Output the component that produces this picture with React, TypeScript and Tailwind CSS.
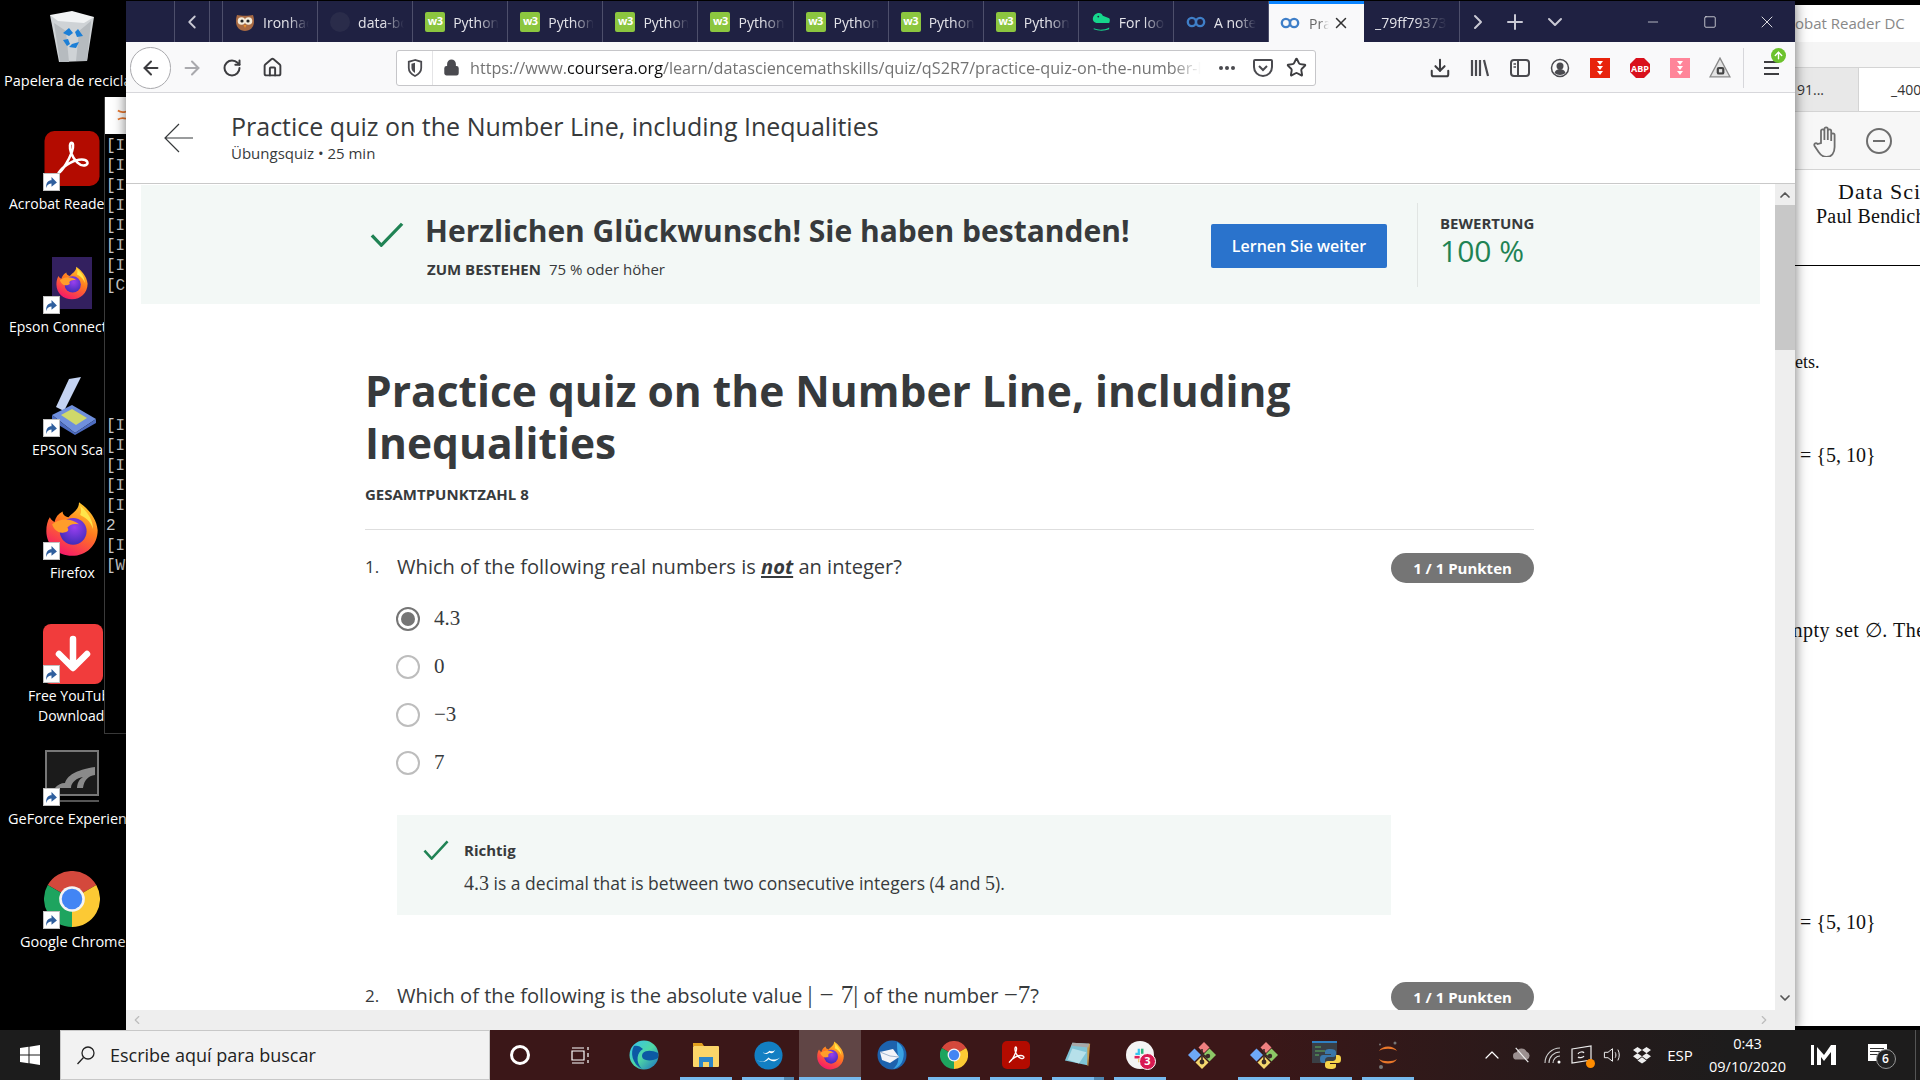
import { ArrowLeft, ArrowRight, ChevronDown, ChevronLeft, ChevronRight, ChevronUp, Download, Home, Lock, Minus, Plus, RotateCw, Square, Star, X } from "lucide-react";

function Firefox({ className }: { className: string }) {
  return (
    <svg viewBox="0 0 48 48" className={className}>
      <defs>
        <linearGradient id="ffBody" x1="0.8" y1="0" x2="0.3" y2="1">
          <stop offset="0" stopColor="#ffd32e" />
          <stop offset="0.45" stopColor="#ff7a1f" />
          <stop offset="1" stopColor="#f5156c" />
        </linearGradient>
        <radialGradient id="ffCore" cx="0.55" cy="0.35" r="0.7">
          <stop offset="0" stopColor="#9a3ff0" />
          <stop offset="1" stopColor="#3a2bb4" />
        </radialGradient>
      </defs>
      <path d="M30 1c7 5 15 13 16 24 0 13-10 22-22 22S2 38 2 26c0-5 1-9 3-12 1 2 2 3 4 4 1-4 3-7 7-9 0 3 2 4 5 5 3-4 9-6 9-13z" fill="url(#ffBody)" />
      <circle cx="25" cy="26" r="11.5" fill="url(#ffCore)" />
      <path d="M7 20c6-5 16-6 23 0-5-1-8 0-10 3 2 2 0 4-3 4-5 1-9-3-10-7z" fill="#ff9d2b" />
      <path d="M31 4c6 5 11 12 11 20-2-7-7-10-11-12 1-3 1-5 0-8z" fill="#ffe54a" />
    </svg>
  );
}

function Chrome({ className }: { className: string }) {
  return (
    <svg viewBox="0 0 48 48" className={className}>
      <path d="M24 24 3.2 12A24 24 0 0 1 44.8 12z" fill="#d4483c" />
      <path d="M24 24 3.2 12A24 24 0 0 0 24 48z" fill="#1ea45f" />
      <path d="M24 24 44.8 12A24 24 0 0 1 24 48z" fill="#fcc934" />
      <circle cx="24" cy="24" r="11" fill="#f4f4f4" />
      <circle cx="24" cy="24" r="8.8" fill="#4285f4" />
    </svg>
  );
}

function Acrobat({ className }: { className: string }) {
  return (
    <svg viewBox="0 0 56 56" className={className}>
      <rect width="56" height="56" rx="10" fill="#b30b00" />
      <path d="M14 43c5-3 11-14 14-22 2-6 1-9-.5-9s-2.500 4-.5 10c3 8 9 14 14 13 5-1 3-6-3-6-7 0-18 5-24 14z" fill="none" stroke="#fff" strokeWidth="2.600" />
    </svg>
  );
}

function Kraken({ className }: { className: string }) {
  return (
    <svg viewBox="0 0 30 30" className={className}>
      <path d="M15 3 9.500 8.500 15 14l5.500-5.500z" fill="#f08080" transform="rotate(0 15 15) translate(2 -1)" />
      <path d="M7.500 8.500 1 15l6.500 6.500L14 15z" fill="#6ea8f7" />
      <path d="M22.500 8.500 16 15l6.500 6.500L29 15z" fill="#8cc866" />
      <path d="M15 16l-6.500 6.500L15 29l6.500-6.500z" fill="#f5d76e" />
      <path d="M15 9v12M15 14l6 4" stroke="#3a2a26" strokeWidth="1.600" fill="none" />
      <circle cx="15" cy="22" r="2.400" fill="#3a2a26" />
      <circle cx="21" cy="16" r="2.200" fill="#3a2a26" />
    </svg>
  );
}

function W3Icon() {
  return (
    <span className="flex h-[20px] w-[20px] shrink-0 items-center justify-center rounded-[2px] bg-[#8cc63f] text-[11px] font-bold tracking-[-0.5px] text-white">
      w3
    </span>
  );
}

function CourseraIcon() {
  return (
    <svg viewBox="0 0 22 14" className="h-[14px] w-[20px] shrink-0">
      <circle cx="6.500" cy="7" r="4.500" fill="none" stroke="#3f7fc8" strokeWidth="2.600" />
      <circle cx="15.500" cy="7" r="4.500" fill="none" stroke="#3f7fc8" strokeWidth="2.600" />
    </svg>
  );
}

function Owl() {
  return (
    <svg viewBox="0 0 20 20" className="h-[20px] w-[20px] shrink-0">
      <path d="M2 3c3 1 13 1 16 0 1 3 1 4 1 7 0 5-4 9-9 9s-9-4-9-9c0-3 0-4 1-7z" fill="#a86a43" />
      <circle cx="6.500" cy="9" r="3.800" fill="#f3ead9" />
      <circle cx="13.500" cy="9" r="3.800" fill="#f3ead9" />
      <circle cx="7" cy="9" r="1.600" fill="#222" />
      <circle cx="13" cy="9" r="1.600" fill="#222" />
      <path d="M8.500 13h3l-1.500 3z" fill="#e9902a" />
    </svg>
  );
}

function Croc() {
  return (
    <svg viewBox="0 0 22 22" className="h-[20px] w-[20px] shrink-0">
      <path d="M2 8c0-4 3-7 7-7 2 0 3 1 4 3l7 3c1 1 1 3 0 5H6c-2 0-4-2-4-4z" fill="#16d68c" />
      <path d="M3 18c5 2 12 2 17-1v2c-5 2-12 2-17 0z" fill="#16d68c" />
      <circle cx="8" cy="5" r="1" fill="#1f2140" />
    </svg>
  );
}

function Tab({ icon, label }: { icon?: React.ReactNode; label: string }) {
  return (
    <div className="flex h-full w-[95.1px] shrink-0 items-center gap-[8px] border-r border-[#4d4f6b] pl-[12px] pr-[8px]">
      {icon}
      <span className="mt-[2px] overflow-hidden whitespace-nowrap text-[14px] text-[#e4e4ea] [mask-image:linear-gradient(to_right,black_55%,transparent)]">
        {label}
      </span>
    </div>
  );
}

function Slot({ children, className = "w-[40px]" }: { children: React.ReactNode; className?: string }) {
  return <div className={`flex h-full shrink-0 items-center justify-center ${className}`}>{children}</div>;
}

function TabBar() {
  return (
    <div className="flex h-[41px] shrink-0 items-stretch bg-[#1f2142] text-[#c9c9d4]">
      <div className="w-[49px] shrink-0 border-r border-[#4d4f6b]" />
      <Slot className="w-[35px] border-r border-[#4d4f6b]">
        <ChevronLeft size={22} strokeWidth={2} />
      </Slot>
      <div className="w-[13px] shrink-0 border-r border-[#4d4f6b]" />
      <Tab icon={<Owl />} label="Ironhack" />
      <Tab icon={<span className="h-[20px] w-[20px] shrink-0 rounded-full bg-[#2a2c4a]" />} label="data-bootcamp" />
      <Tab icon={<W3Icon />} label="Python" />
      <Tab icon={<W3Icon />} label="Python" />
      <Tab icon={<W3Icon />} label="Python" />
      <Tab icon={<W3Icon />} label="Python" />
      <Tab icon={<W3Icon />} label="Python" />
      <Tab icon={<W3Icon />} label="Python" />
      <Tab icon={<W3Icon />} label="Python" />
      <Tab icon={<Croc />} label="For loops" />
      <Tab icon={<CourseraIcon />} label="A note" />
      <div className="flex w-[95px] shrink-0 items-center gap-[9px] border-t-[3px] border-[#0a84ff] bg-[#f9f9fa] pl-[11px] text-[#0c0c0d]">
        <CourseraIcon />
        <span className="w-[20px] overflow-hidden whitespace-nowrap text-[14px] text-[#666] [mask-image:linear-gradient(to_right,black_50%,transparent)]">Practice</span>
        <X size={18} strokeWidth={2} className="-ml-[6px] shrink-0 text-[#333]" />
      </div>
      <div className="flex w-[96px] shrink-0 items-center border-r border-[#4d4f6b] pl-[11px]">
        <span className="mt-[2px] overflow-hidden whitespace-nowrap text-[14px] text-[#e4e4ea] [mask-image:linear-gradient(to_right,black_55%,transparent)]">_79ff79373</span>
      </div>
      <Slot className="w-[36px]">
        <ChevronRight size={24} strokeWidth={2} />
      </Slot>
      <Slot className="w-[38px]">
        <Plus size={24} strokeWidth={2} />
      </Slot>
      <Slot className="w-[42px]">
        <ChevronDown size={24} strokeWidth={2} />
      </Slot>
      <div className="flex-1" />
      <Slot className="w-[57px] text-white">
        <Minus size={16} strokeWidth={1} />
      </Slot>
      <Slot className="w-[57px] text-white">
        <Square size={14} strokeWidth={1.200} />
      </Slot>
      <Slot className="w-[57px] text-white">
        <X size={20} strokeWidth={1} />
      </Slot>
    </div>
  );
}

function Toolbar() {
  return (
    <div className="flex h-[51px] shrink-0 items-center border-b border-[#d7d7db] bg-[#f9f9fa] pt-px text-[#3d3d40]">
      <div className="ml-[4px] flex h-[42px] w-[41px] shrink-0 items-center justify-center rounded-full border border-[#a9a9ad] bg-white">
        <ArrowLeft size={22} strokeWidth={2.200} />
      </div>
      <Slot className="ml-[1px] w-[40px] text-[#a9a9ad]">
        <ArrowRight size={22} strokeWidth={2.200} />
      </Slot>
      <Slot>
        <RotateCw size={20} strokeWidth={2.400} />
      </Slot>
      <Slot>
        <Home size={21} strokeWidth={2.200} />
      </Slot>
      <div className="ml-[104px] flex h-[36px] w-[920px] shrink-0 items-center rounded-[3px] border border-[#c6c6c9] bg-white">
        <Slot className="w-[36px] border-r border-[#e4e4e6]">
          <svg viewBox="0 0 18 20" className="h-[20px] w-[16px]">
            <path d="M9 1 2 3v7c0 4 3 7 7 9 4-2 7-5 7-9V3z" fill="none" stroke="#4a4a4f" strokeWidth="2" />
            <path d="M9 4 5 5.300V10c0 2.500 2 4.500 4 5.600z" fill="#4a4a4f" />
          </svg>
        </Slot>
        <Slot className="w-[37px]">
          <Lock size={17} fill="#4a4a4f" strokeWidth={2.400} className="text-[#4a4a4f]" />
        </Slot>
        <div className="mt-[2px] w-[731px] shrink-0 overflow-hidden whitespace-nowrap text-[16.200px] text-[#737373] [mask-image:linear-gradient(to_right,black_96%,transparent)]">
          https://www.<span className="text-[#0c0c0d]">coursera.org</span>/learn/datasciencemathskills/quiz/qS2R7/practice-quiz-on-the-number-line-including-inequalities/attempt
        </div>
        <Slot className="ml-[8px] w-[36px]">
          <span className="flex gap-[2px]">
            <span className="h-[4px] w-[4px] rounded-full bg-[#4a4a4f]" />
            <span className="h-[4px] w-[4px] rounded-full bg-[#4a4a4f]" />
            <span className="h-[4px] w-[4px] rounded-full bg-[#4a4a4f]" />
          </span>
        </Slot>
        <Slot className="w-[35px]">
          <svg viewBox="0 0 20 20" className="h-[20px] w-[20px]">
            <path d="M2 2h16a1 1 0 0 1 1 1v6c0 5-4 9-9 9s-9-4-9-9V3a1 1 0 0 1 1-1z" fill="none" stroke="#4a4a4f" strokeWidth="2" />
            <path d="m6 8 4 4 4-4" fill="none" stroke="#4a4a4f" strokeWidth="2" />
          </svg>
        </Slot>
        <Slot className="w-[33px]">
          <Star size={21} strokeWidth={2.200} />
        </Slot>
      </div>
      <Slot className="ml-[104px] w-[40px]">
        <Download size={22} strokeWidth={2.200} />
      </Slot>
      <Slot>
        <svg viewBox="0 0 20 20" className="h-[20px] w-[20px]">
          <path d="M2 2v16M6 2v16M10 2v16M14 2l4 16" stroke="#4a4a4f" strokeWidth="2.200" fill="none" />
        </svg>
      </Slot>
      <Slot>
        <svg viewBox="0 0 20 20" className="h-[20px] w-[20px]">
          <rect x="1" y="2" width="18" height="16" rx="3" fill="none" stroke="#4a4a4f" strokeWidth="2" />
          <path d="M8 2v16" stroke="#4a4a4f" strokeWidth="2" />
          <path d="M3.500 6h2.500M3.500 9h2.500" stroke="#4a4a4f" strokeWidth="1.500" />
        </svg>
      </Slot>
      <Slot>
        <svg viewBox="0 0 20 20" className="h-[20px] w-[20px]">
          <circle cx="10" cy="10" r="8.500" fill="none" stroke="#4a4a4f" strokeWidth="1.500" />
          <circle cx="10" cy="8" r="3.500" fill="#4a4a4f" />
          <path d="M4.500 15c1-3 3-4 5.500-4s4.500 1 5.500 4c-3 2.500-8 2.500-11 0z" fill="#4a4a4f" />
        </svg>
      </Slot>
      <Slot>
        <span className="flex h-[20px] w-[20px] flex-col items-center justify-center gap-[1px] bg-[#e8230c]">
          <span className="h-0 w-0 border-x-[3px] border-t-[4px] border-x-transparent border-t-white" />
          <span className="h-0 w-0 border-x-[3px] border-t-[4px] border-x-transparent border-t-white" />
          <span className="h-0 w-0 border-x-[3px] border-t-[4px] border-x-transparent border-t-white" />
        </span>
      </Slot>
      <Slot>
        <svg viewBox="0 0 20 20" className="h-[20px] w-[20px]">
          <path d="M6 0h8l6 6v8l-6 6H6l-6-6V6z" fill="#d9111c" />
          <text x="10" y="13.500" textAnchor="middle" fontSize="9" fontWeight="700" fill="#fff" fontFamily="Open Sans, sans-serif">ABP</text>
        </svg>
      </Slot>
      <Slot>
        <span className="flex h-[20px] w-[20px] flex-col items-center justify-center gap-[1px] bg-[#ff8599]">
          <span className="h-0 w-0 border-x-[3px] border-t-[4px] border-x-transparent border-t-white" />
          <span className="h-0 w-0 border-x-[3px] border-t-[4px] border-x-transparent border-t-white" />
          <span className="h-0 w-0 border-x-[3px] border-t-[4px] border-x-transparent border-t-white" />
        </span>
      </Slot>
      <Slot>
        <svg viewBox="0 0 20 20" className="h-[22px] w-[22px]">
          <path d="M10 1 1 18h18z" fill="#e4e4e4" stroke="#8a8a8a" strokeWidth="1.200" />
          <rect x="7" y="9" width="7" height="7" rx="2" fill="#444" />
          <rect x="9" y="11" width="3" height="3" fill="#e4e4e4" />
        </svg>
      </Slot>
      <div className="ml-[3px] h-[40px] w-px shrink-0 bg-[#d7d7db]" />
      <div className="relative ml-[20px] flex flex-col gap-[4px]">
        <span className="h-[2px] w-[15px] bg-[#3d3d40]" />
        <span className="h-[2px] w-[15px] bg-[#3d3d40]" />
        <span className="h-[2px] w-[15px] bg-[#3d3d40]" />
        <span className="absolute -right-[7px] -top-[13px] flex h-[15px] w-[15px] items-center justify-center rounded-full bg-[#6cc22c] text-white">
          <ArrowRight size={11} strokeWidth={3} className="-rotate-90" />
        </span>
      </div>
    </div>
  );
}

function GreenCheck({ className }: { className: string }) {
  return (
    <svg viewBox="0 0 36 28" preserveAspectRatio="none" className={className}>
      <path d="M2 15 12 26 34 2" fill="none" stroke="#1f8354" strokeWidth="3.500" />
    </svg>
  );
}

function Pill() {
  return (
    <div className="flex h-[30px] w-[143px] shrink-0 items-center justify-center rounded-full bg-[#757575] text-[15px] font-bold text-white">
      1 / 1 Punkten
    </div>
  );
}

function Math({ children }: { children: React.ReactNode }) {
  return <span className="font-['Liberation_Serif',serif] text-[20px]">{children}</span>;
}

function QuestionMath({ children }: { children: React.ReactNode }) {
  return <span className="font-['Liberation_Serif',serif] text-[25px] leading-[20px]">{children}</span>;
}

function Option({ label, checked }: { label: string; checked?: boolean }) {
  return (
    <div className="flex h-[48px] items-center gap-[14px]">
      <span className={`-ml-px flex h-[24px] w-[24px] items-center justify-center rounded-full border-[2px] bg-white ${checked ? "border-[#757575]" : "border-[#bdbdbd]"}`}>
        {checked && <span className="h-[14px] w-[14px] rounded-full bg-[#757575]" />}
      </span>
      <span className="font-['Liberation_Serif',serif] text-[21px] text-[#373a3c]">{label}</span>
    </div>
  );
}

function QuizPage() {
  return (
    <div className="flex min-h-0 flex-1 bg-white text-[#373a3c]">
      <div className="flex min-w-0 flex-1 flex-col">
        <div className="min-h-0 flex-1 overflow-hidden">
          <div className="mx-[15px] mt-px flex h-[119px] items-center bg-[#f3f8f6] pr-[42px]">
            <GreenCheck className="-mt-[20px] ml-[229px] h-[25px] w-[34px] shrink-0" />
            <div className="ml-[21px] mt-[2px] w-[786px] shrink-0">
              <div className="text-[30px] font-bold leading-[38px]">Herzlichen Glückwunsch! Sie haben bestanden!</div>
              <div className="mt-[9px] pl-[2px] text-[15px] leading-[20px]">
                <span className="font-bold">ZUM BESTEHEN</span>
                <span className="ml-[8px]">75 % oder höher</span>
              </div>
            </div>
            <div className="mt-[3px] flex h-[44px] w-[176px] shrink-0 items-center justify-center rounded-[2px] bg-[#2a73cc] text-[16px] font-semibold text-white">
              Lernen Sie weiter
            </div>
            <div className="ml-[30px] h-[84px] w-px shrink-0 bg-[#e1e5e3]" />
            <div className="-mt-[7px] ml-[22px]">
              <div className="text-[15px] font-bold leading-[20px]">BEWERTUNG</div>
              <div className="text-[30px] leading-[36px] text-[#1f8354]">100 %</div>
            </div>
          </div>
          <div className="ml-[239px] mt-[61px] w-[1169px]">
            <h1 className="text-[42.500px] font-bold leading-[52px]">
              Practice quiz on the Number Line, including
              <br />
              Inequalities
            </h1>
            <div className="mt-[15px] text-[15px] font-bold leading-[20px]">GESAMTPUNKTZAHL 8</div>
            <div className="mt-[25px] h-px bg-[#dedede]" />
            <div className="mt-[23px] flex h-[30px] items-center text-[20.100px]">
              <span className="-mt-[2px] w-[32px] shrink-0 text-[17px]">1.</span>
              <span className="-mt-[2px] flex-1">
                Which of the following real numbers is <b className="italic underline">not</b> an integer?
              </span>
              <Pill />
            </div>
            <div className="ml-[32px] mt-[12px]">
              <Option label="4.3" checked />
              <Option label="0" />
              <Option label="−3" />
              <Option label="7" />
            </div>
            <div className="ml-[32px] mt-[28px] h-[100px] w-[994px] bg-[#f3f8f6] pt-[25px]">
              <div className="flex h-[20px] items-center">
                <GreenCheck className="ml-[26px] h-[20px] w-[26px]" />
                <span className="ml-[15px] text-[15px] font-bold">Richtig</span>
              </div>
              <div className="ml-[67px] mt-[9px] text-[17.500px] leading-[28px]">
                <Math>4.3</Math> is a decimal that is between two consecutive integers (<Math>4</Math> and <Math>5</Math>).
              </div>
            </div>
            <div className="mt-[67px] flex h-[30px] items-center text-[20.100px]">
              <span className="-mt-[2px] w-[32px] shrink-0 text-[17px]">2.</span>
              <span className="-mt-[2px] flex-1 whitespace-nowrap">
                Which of the following is the absolute value <QuestionMath>|<span className="mx-[7px]">−</span>7|</QuestionMath> of the number <QuestionMath>−7</QuestionMath>?
              </span>
              <Pill />
            </div>
          </div>
        </div>
        <div className="flex h-[20px] shrink-0 items-center justify-between bg-[#eeeeee] px-[4px] text-[#bcbcbc]">
          <ChevronLeft size={14} strokeWidth={2} />
          <ChevronRight size={14} strokeWidth={2} />
        </div>
      </div>
      <div className="flex w-[20px] shrink-0 flex-col items-center bg-[#eeeeee] text-[#555]">
        <div className="flex h-[21px] items-center">
          <ChevronUp size={16} strokeWidth={2.600} />
        </div>
        <div className="h-[145px] w-full bg-[#c8c8c8]" />
        <div className="flex-1" />
        <div className="flex h-[40px] items-start">
          <ChevronDown size={16} strokeWidth={2.600} />
        </div>
      </div>
    </div>
  );
}

function Browser() {
  return (
    <div className="absolute left-[126px] top-0 flex h-[1030px] w-[1669px] flex-col border-t border-black font-['Open_Sans',sans-serif] shadow-[0_0_12px_rgba(0,0,0,0.55)]">
      <TabBar />
      <Toolbar />
      <div className="flex h-[91px] shrink-0 items-center border-b border-[#c9c9c9] bg-white text-[#373a3c]">
        <svg viewBox="0 0 30 30" className="ml-[38px] h-[30px] w-[30px] shrink-0">
          <path d="M29 15H1M15 1 1 15l14 14" fill="none" stroke="#373a3c" strokeWidth="1.200" />
        </svg>
        <div className="-mt-[2px] ml-[37px]">
          <div className="text-[25px] leading-[30px]">Practice quiz on the Number Line, including Inequalities</div>
          <div className="mt-[2px] text-[15px] leading-[20px]">Übungsquiz • 25 min</div>
        </div>
      </div>
      <QuizPage />
    </div>
  );
}

function Shortcut() {
  return (
    <span className="absolute left-[43px] top-[50px] flex h-[18px] w-[17px] items-center justify-center border border-[#c0c0c0] bg-white">
      <svg viewBox="0 0 12 12" className="h-[13px] w-[13px]">
        <path d="M1 11c0-5 2-7 5-7V1l5 5-5 4V7C4 7 2 8 1 11z" fill="#2f5f9e" />
      </svg>
    </span>
  );
}

function DesktopIcon({ icon, label, label2, pad, shortcut = true, narrow }: { icon: React.ReactNode; label: string; label2?: string; pad: string; shortcut?: boolean; narrow?: boolean }) {
  return (
    <div className="relative h-[123px] w-[126px] overflow-hidden">
      <div className="flex h-[71px] items-end justify-center pl-[18px]">{icon}</div>
      {shortcut && <Shortcut />}
      <div className={`overflow-hidden whitespace-nowrap leading-[20px] text-white ${narrow ? "w-[104px] text-[14px]" : "w-[126px] text-[14.500px]"} ${pad}`}>{label}</div>
      {label2 && <div className="w-[104px] overflow-hidden whitespace-nowrap pl-[38px] text-[14px] leading-[20px] text-white">{label2}</div>}
    </div>
  );
}

function Desktop() {
  return (
    <div className="absolute left-0 top-0 w-[126px] font-['Open_Sans',sans-serif]">
      <DesktopIcon
        shortcut={false}
        pad="pl-[4px]"
        label="Papelera de reciclaje"
        icon={
          <svg viewBox="0 0 48 54" className="mb-[8px] h-[54px] w-[48px]">
            <path d="M2 6 46 8 39 52 11 53z" fill="#cfd3d6" />
            <path d="M2 6 24 2l22 6-10 6-26-2z" fill="#f1f3f4" />
            <path d="M12 53 6 14l12 8 3 31zM39 52l4-40-12 10-3 30z" fill="#b6bbbf" />
            <path d="M15 24 21 19l4 5-4 3zM30 20l5 7-6 1-2-5zM19 37l-4-6 5-1 2 5zM31 33l-3 6-7-1 3-3z" fill="#1c7fd6" />
          </svg>
        }
      />
      <DesktopIcon narrow pad="pl-[9px]" label="Acrobat Reader DC" icon={<Acrobat className="mb-[8px] h-[55px] w-[56px]" />} />
      <DesktopIcon
        narrow
        pad="pl-[9px]"
        label="Epson Connect Printer"
        icon={
          <span className="relative mb-[8px] flex h-[52px] w-[40px] items-center justify-center bg-[#33205f]">
            <Firefox className="h-[34px] w-[34px]" />
          </span>
        }
      />
      <DesktopIcon
        narrow
        pad="pl-[32px]"
        label="EPSON Scan"
        icon={
          <svg viewBox="0 0 50 64" className="-mb-[1px] h-[64px] w-[50px]">
            <path d="M22 2 34 0 17 34l-8-4z" fill="#c4d3f2" />
            <path d="M5 38 25 28 49 42 28 56z" fill="#6f8fdc" />
            <path d="M14 38 25 32 40 41 29 48z" fill="#cfd86a" />
            <path d="M5 38v6l23 14 21-12v-4L28 56z" fill="#4d6cc0" />
          </svg>
        }
      />
      <DesktopIcon narrow pad="pl-[50px]" label="Firefox" icon={<Firefox className="mb-[5px] h-[58px] w-[56px]" />} />
      <DesktopIcon
        narrow
        pad="pl-[28px]"
        label="Free YouTube"
        label2="Downloader"
        icon={
          <span className="mb-[2px] ml-[1px] flex h-[60px] w-[60px] items-center justify-center rounded-[8px] bg-[#f13c3c] text-white">
            <ArrowDown />
          </span>
        }
      />
      <DesktopIcon
        pad="pl-[8px]"
        label="GeForce Experience"
        icon={
          <svg viewBox="0 0 54 54" className="mb-[5px] h-[54px] w-[54px]">
            <rect x="1" y="1" width="52" height="44" fill="#1b1b1b" stroke="#777" strokeWidth="2" />
            <path d="M0 50h54v2H0z" fill="#555" />
            <path d="M10 38c2-3 6-5 10-5 2-7 10-13 30-16v8c-7 1-11 5-12 13h-6c0-4 2-9 6-11-6 1-12 5-12 11z" fill="#8a8a8a" />
          </svg>
        }
      />
      <DesktopIcon pad="pl-[20px]" label="Google Chrome" icon={<Chrome className="mb-[5px] h-[56px] w-[56px]" />} />
    </div>
  );
}

function ArrowDown() {
  return (
    <svg viewBox="0 0 40 40" className="h-[40px] w-[40px]">
      <path d="M20 5v28M6 20l14 14 14-14" fill="none" stroke="#fff" strokeWidth="6.500" strokeLinecap="round" strokeLinejoin="round" />
    </svg>
  );
}

function Terminal() {
  const first = ["[I", "[I", "[I", "[I", "[I", "[I", "[I", "[C"];
  const second = ["[I", "[I", "[I", "[I", "[I", "2", "[I", "[W"];
  return (
    <div className="absolute left-[104px] top-[97px] flex h-[637px] w-[22px] flex-col overflow-hidden border-b border-l border-[#3a3a3a] bg-black font-['Liberation_Mono',monospace] text-[16px] leading-[20px] text-[#c8c8c8]">
      <div className="flex h-[37px] shrink-0 items-center bg-white pl-[12px]">
        <svg viewBox="0 0 10 20" className="h-[20px] w-[10px]">
          <path d="M1 4c3 2 6 2 9 1M1 14c3-2 6-2 9-1" fill="none" stroke="#e8762d" strokeWidth="2" />
        </svg>
      </div>
      <div className="mt-[2px] pl-[1px]">
        {first.map((t, i) => (
          <div key={i}>{t}</div>
        ))}
      </div>
      <div className="mt-[120px] pl-[1px]">
        {second.map((t, i) => (
          <div key={i}>{t}</div>
        ))}
      </div>
    </div>
  );
}

function ReaderWindow() {
  return (
    <div className="absolute left-[1795px] top-[5px] flex h-[1021px] w-[125px] flex-col overflow-hidden bg-white text-[#888]">
      <div className="flex h-[37px] shrink-0 items-center whitespace-nowrap font-['Open_Sans',sans-serif] text-[15px]">obat Reader DC</div>
      <div className="h-[26px] shrink-0 border-b border-[#d4d4d4] bg-[#f5f5f5]" />
      <div className="flex h-[44px] shrink-0 border-b border-[#d4d4d4] bg-[#f5f5f5] font-['Open_Sans',sans-serif] text-[14px] text-[#333]">
        <div className="flex w-[64px] shrink-0 items-center border-r border-[#d4d4d4] bg-[#e8e8e8] pl-[2px]">91...</div>
        <div className="flex flex-1 items-center whitespace-nowrap bg-white pl-[32px]">_400</div>
      </div>
      <div className="flex h-[58px] shrink-0 items-center border-b border-[#d4d4d4] bg-[#f7f7f7] pl-[17px] text-[#6e6e6e]">
        <svg viewBox="0 0 28 32" className="h-[32px] w-[28px]">
          <path d="M9 18V6a1.700 1.700 0 0 1 3.400 0v9-11a1.700 1.700 0 0 1 3.400 0v11-9a1.700 1.700 0 0 1 3.400 0v10-6a1.700 1.700 0 0 1 3.400 0v12c0 6-3 10-8 10-4 0-6-2-8-5l-4-6c-1-2 1-4 3-2z" fill="none" stroke="#6e6e6e" strokeWidth="1.800" />
        </svg>
        <span className="ml-[26px] flex h-[26px] w-[26px] items-center justify-center rounded-full border-[2px] border-[#6e6e6e]">
          <span className="h-[2px] w-[12px] bg-[#6e6e6e]" />
        </span>
      </div>
      <div className="min-h-0 flex-1 overflow-hidden whitespace-nowrap font-['Liberation_Serif',serif] text-[20px] leading-[24px] text-[#111]">
        <div className="mt-[10px] pl-[43px] text-[22px] tracking-[1px]">Data Science</div>
        <div className="pl-[21px] tracking-[0.2px]">Paul Bendich</div>
        <div className="mt-[37px] h-px bg-black" />
        <div className="mt-[84px] text-[18px]">ets.</div>
        <div className="mt-[69px] pl-[5px]">= {"{5, 10}"}</div>
        <div className="mt-[151px] -ml-[8px] tracking-[0.5px]">mpty set ∅. The</div>
        <div className="mt-[268px] pl-[5px]">= {"{5, 10}"}</div>
      </div>
    </div>
  );
}

function TaskIcon({ children, line, active }: { children: React.ReactNode; line?: "full" | "split"; active?: boolean }) {
  return (
    <div className={`relative flex h-full w-[62px] shrink-0 items-center justify-center ${active ? "bg-[#604545]" : ""}`}>
      {children}
      {line && (
        <span className={`absolute bottom-0 h-[3px] bg-[#76b9ed] ${active ? "inset-x-0" : "left-[5px] right-[5px]"}`}>
          {line === "split" && <span className="absolute inset-y-0 right-0 w-[10px] bg-[#4f86b0]" />}
        </span>
      )}
    </div>
  );
}

function Taskbar() {
  return (
    <div className="absolute bottom-0 left-0 flex h-[50px] w-[1920px] bg-[linear-gradient(to_right,#3b1718_65%,#1d1c1c_90%)] font-['Open_Sans',sans-serif] text-white">
      <Slot className="w-[60px] bg-[#1c1c1c]">
        <svg viewBox="0 0 20 20" className="h-[20px] w-[20px]">
          <path d="M0 3 8.500 1.800v7.700H0zM9.500 1.700 20 0v9.500H9.500zM0 10.500h8.500v7.700L0 17zM9.500 10.500H20V20L9.500 18.300z" fill="#fff" />
        </svg>
      </Slot>
      <div className="flex w-[430px] shrink-0 items-center border border-[#c8c8c8] bg-[#f2f2f2] text-[18px] text-[#222]">
        <svg viewBox="0 0 20 20" className="ml-[15px] h-[20px] w-[20px]">
          <circle cx="12" cy="8" r="6" fill="none" stroke="#222" strokeWidth="1.300" />
          <path d="M7.500 12.500 1.500 19" stroke="#222" strokeWidth="1.300" />
        </svg>
        <span className="ml-[14px]">Escribe aquí para buscar</span>
      </div>
      <Slot className="w-[60px]">
        <span className="h-[20px] w-[20px] rounded-full border-[3px] border-white" />
      </Slot>
      <Slot className="w-[62px]">
        <svg viewBox="0 0 20 20" className="h-[20px] w-[20px]">
          <path d="M1 6h12v9H1zM1 3h12M1 18h12M17 2v3M17 8v4M17 15v3" fill="none" stroke="#fff" strokeWidth="1.200" />
        </svg>
      </Slot>
      <div className="w-px shrink-0" />
      <TaskIcon>
        <svg viewBox="0 0 30 30" className="h-[30px] w-[30px]">
          <defs>
            <linearGradient id="edge" x1="0" y1="0" x2="1" y2="1">
              <stop offset="0" stopColor="#35c1f1" />
              <stop offset="0.5" stopColor="#4fd8a4" />
              <stop offset="1" stopColor="#1b6ec2" />
            </linearGradient>
          </defs>
          <circle cx="15" cy="15" r="14.500" fill="url(#edge)" />
          <path d="M29 18c-3 2-8 3-12 2-4-1-5-4-3-7 3-3 9-3 15 0 0 2 0 4 0 5zM5 6C1 12 3 24 13 29 6 22 8 12 14 9 11 6 8 5 5 6z" fill="#0c59a4" />
        </svg>
      </TaskIcon>
      <TaskIcon line="full">
        <svg viewBox="0 0 28 26" className="h-[26px] w-[28px]">
          <path d="M1 1h9l2 3h-11z" fill="#e2a01e" />
          <rect x="1" y="4" width="26" height="21" rx="1" fill="#fbd569" />
          <path d="M7 25V15h14v10h-4v-5h-6v5z" fill="#2d86c9" />
        </svg>
      </TaskIcon>
      <TaskIcon line="split">
        <svg viewBox="0 0 30 30" className="h-[29px] w-[29px]">
          <circle cx="15" cy="15" r="14.500" fill="#127fc3" />
          <path d="M3 20c6 3 8 1 12-3 3 3 7 3 12 0-6 6-9 4-12 2-3 3-7 4-12 1zM9 12c3 1 5 0 7-2 2 1 4 1 6-1-2 4-4 4-6 3-2 2-4 2-7 0z" fill="#fff" />
        </svg>
      </TaskIcon>
      <TaskIcon line="full" active>
        <Firefox className="h-[29px] w-[29px]" />
      </TaskIcon>
      <TaskIcon>
        <svg viewBox="0 0 30 30" className="h-[30px] w-[30px]">
          <circle cx="15" cy="15" r="14.500" fill="#1d62ad" />
          <path d="M20 2c6 4 8 10 6 17-1 5-5 9-10 10 5-4 6-9 5-14-1-5-1-9-1-13z" fill="#3aa3e3" />
          <path d="M3 12 16 9l6 8-9 6-8-3z" fill="#f2f4f8" />
          <path d="M3 12l10 4 9 1" fill="none" stroke="#9fb4ce" strokeWidth="1" />
        </svg>
      </TaskIcon>
      <TaskIcon line="full">
        <Chrome className="h-[28px] w-[28px]" />
      </TaskIcon>
      <TaskIcon line="full">
        <Acrobat className="h-[28px] w-[28px]" />
      </TaskIcon>
      <TaskIcon line="split">
        <svg viewBox="0 0 30 30" className="h-[28px] w-[28px]">
          <path d="M9 2 27 3 25 26 1 21z" fill="#7fc4d6" />
          <path d="M25 3h3l-2 24-1-1z" fill="#c89a4a" />
          <path d="M9 2 27 3l-1 4-18-2z" fill="#a8a8a8" />
          <path d="M9 8 24 12 16 24 4 20z" fill="#b6e0ea" />
        </svg>
      </TaskIcon>
      <TaskIcon line="full">
        <span className="relative flex h-[28px] w-[28px] items-center justify-center rounded-full bg-[#f4f4f4]">
          <svg viewBox="0 0 20 20" className="h-[17px] w-[17px]">
            <path d="M8 2v6H4" fill="none" stroke="#36c5f0" strokeWidth="2.600" />
            <path d="M12 2v6" stroke="#2eb67d" strokeWidth="3" />
            <path d="M3 12h6" stroke="#e01e5a" strokeWidth="3" />
            <path d="M9 14v4" stroke="#ecb22e" strokeWidth="3" />
          </svg>
          <span className="absolute -bottom-[1px] -right-[2px] flex h-[17px] w-[17px] items-center justify-center rounded-full border border-white bg-[#d91a52] text-[11px] font-bold">3</span>
        </span>
      </TaskIcon>
      <TaskIcon>
        <Kraken className="h-[30px] w-[30px]" />
      </TaskIcon>
      <TaskIcon line="full">
        <Kraken className="h-[30px] w-[30px]" />
      </TaskIcon>
      <TaskIcon line="full">
        <svg viewBox="0 0 30 30" className="h-[30px] w-[30px]">
          <rect x="1" y="1" width="25" height="22" fill="#3a3f45" />
          <rect x="1" y="1" width="25" height="2" fill="#2f7fc1" />
          <path d="M4 7h6M4 11h10M4 15h4" stroke="#5fb45f" strokeWidth="1" />
          <path d="M19 9c-4 0-5 1-5 3v2h6v1h-8c-2 0-3 1-3 4s1 4 3 4h2v-3c0-2 2-3 3-3h5c2 0 3-1 3-3v-2c0-2-2-3-6-3z" fill="#3a77ab" />
          <path d="M20 29c4 0 5-1 5-3v-2h-6v-1h8c2 0 3-1 3-4s-1-4-3-4h-2v3c0 2-2 3-3 3h-5c-2 0-3 1-3 3v2c0 2 2 3 6 3z" fill="#f7d44a" />
        </svg>
      </TaskIcon>
      <TaskIcon line="full">
        <svg viewBox="0 0 24 30" className="h-[30px] w-[24px]">
          <path d="M3 11c3-6 15-6 18 0-4-3-14-3-18 0zM3 19c3 6 15 6 18 0-4 3-14 3-18 0z" fill="#e9772a" />
          <circle cx="19" cy="3" r="1.500" fill="#767677" />
          <circle cx="4" cy="4.500" r="1" fill="#767677" />
          <circle cx="5" cy="27" r="2" fill="#767677" />
        </svg>
      </TaskIcon>
      <div className="w-[58px] shrink-0" />
      <Slot className="w-[30px]">
        <ChevronUp size={24} strokeWidth={1.200} />
      </Slot>
      <Slot className="w-[30px]">
        <svg viewBox="0 0 22 20" className="h-[18px] w-[20px]">
          <path d="M5 15a4 4 0 0 1 0-8 6 6 0 0 1 11-1 5 5 0 0 1 1 9z" fill="#9c9090" />
          <path d="M4 2 18 18" stroke="#f0f0f0" strokeWidth="1.300" />
        </svg>
      </Slot>
      <Slot className="w-[30px]">
        <svg viewBox="0 0 20 20" className="h-[20px] w-[20px]">
          <path d="M3 18A15 15 0 0 1 18 3M7 18A11 11 0 0 1 18 7M11 18a7 7 0 0 1 7-7" fill="none" stroke="#cfcfcf" strokeWidth="1.100" />
          <circle cx="17" cy="17" r="1.500" fill="#fff" />
        </svg>
      </Slot>
      <Slot className="w-[30px]">
        <span className="relative">
          <svg viewBox="0 0 22 20" className="h-[20px] w-[22px]">
            <path d="M1 4 20 1v14L1 18z" fill="none" stroke="#eee" strokeWidth="1.200" />
            <path d="M7 9c1-2 5-3 6-1M13 11c-1 2-5 2-6 1" fill="none" stroke="#eee" strokeWidth="1.200" />
          </svg>
          <span className="absolute -bottom-[3px] right-[-2px] h-[9px] w-[9px] rounded-full bg-[#ff8c00]" />
        </span>
      </Slot>
      <Slot className="w-[30px]">
        <svg viewBox="0 0 22 20" className="h-[18px] w-[21px]">
          <path d="M2 7h4l5-4v14l-5-4H2zM14 7c1 2 1 4 0 6M17 4c2 4 2 8 0 12" fill="none" stroke="#eee" strokeWidth="1.100" />
        </svg>
      </Slot>
      <Slot className="w-[30px]">
        <svg viewBox="0 0 20 20" className="h-[18px] w-[18px]">
          <path d="M5 1 0 4.500 5 8l5-3.500zM15 1l-5 3.500L15 8l5-3.500zM5 8l-5 3.500L5 15l5-3.500zM15 8l-5 3.500L15 15l5-3.500zM5 16l5 3.500 5-3.500-5-3.500z" fill="#eee" />
        </svg>
      </Slot>
      <Slot className="w-[46px] text-[15px]">ESP</Slot>
      <div className="flex w-[89px] shrink-0 flex-col items-center justify-center text-[14.500px] leading-[23px]">
        <span>0:43</span>
        <span>09/10/2020</span>
      </div>
      <Slot className="w-[64px]">
        <svg viewBox="0 0 26 22" className="h-[22px] w-[26px]">
          <path d="M0 1h3v20H0zM6 3l7 8 7-10h5v20h-5V8l-7 9-3-4v8H6z" fill="#fff" />
        </svg>
      </Slot>
      <Slot className="w-[48px]">
        <span className="relative -ml-[6px] -mt-[6px] block h-[17px] w-[19px] bg-white">
          <span className="absolute left-[2px] top-[4px] h-px w-[14px] bg-[#333]" />
          <span className="absolute left-[2px] top-[7px] h-px w-[14px] bg-[#333]" />
          <span className="absolute left-[2px] top-[10px] h-px w-[9px] bg-[#333]" />
          <span className="absolute -bottom-[8px] -right-[9px] flex h-[20px] w-[20px] items-center justify-center rounded-full border border-[#999] bg-[#222] text-[12px] font-semibold">6</span>
        </span>
      </Slot>
      <div className="ml-[11px] h-full w-px bg-[#555]" />
    </div>
  );
}

export default function App() {
  return (
    <div className="relative h-[1080px] w-[1920px] overflow-hidden bg-black">
      <Desktop />
      <Terminal />
      <ReaderWindow />
      <Browser />
      <Taskbar />
    </div>
  );
}
